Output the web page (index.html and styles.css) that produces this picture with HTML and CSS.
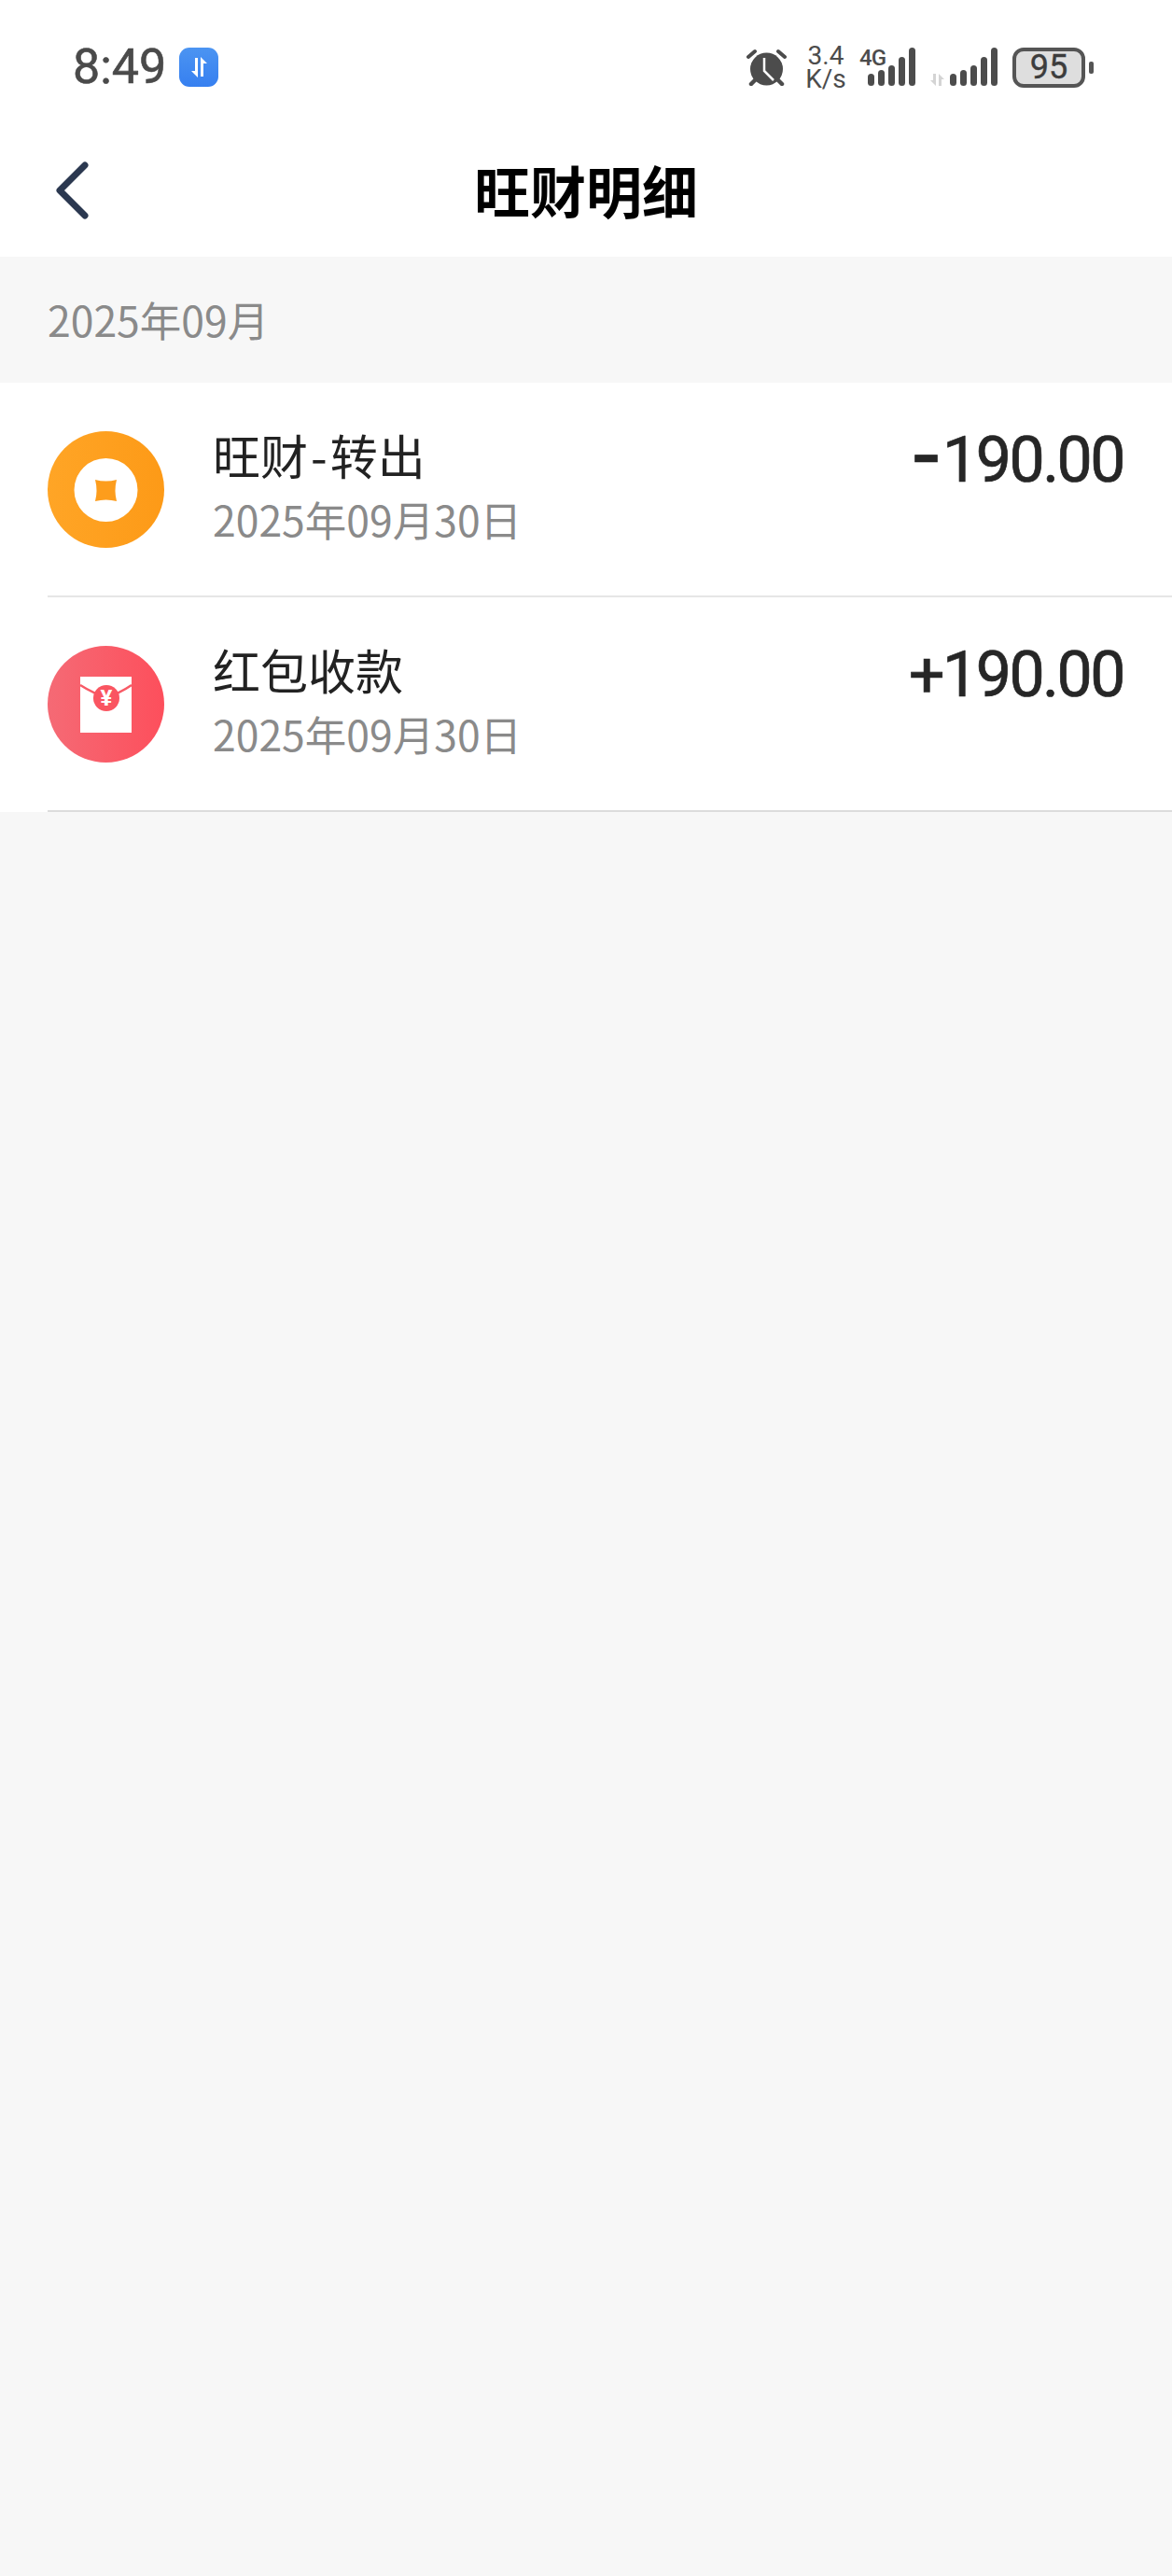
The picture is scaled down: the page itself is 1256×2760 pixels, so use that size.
FILE: index.html
```html
<!DOCTYPE html>
<html lang="zh-CN">
<head>
    <meta charset="UTF-8">
    <meta name="viewport" content="width=device-width, initial-scale=1.0">
    <title>旺财明细</title>
    <link rel="stylesheet" href="styles.css">
</head>
<body>
    <div class="status-bar">
        <div class="status-left">
            <span class="time">8:49</span>
            <svg class="badge" width="42" height="42" viewBox="0 0 42 42">
                <defs>
                    <linearGradient id="badgeFill" x1="0" y1="0" x2="0" y2="1">
                        <stop offset="0" stop-color="#4b94f2"/>
                        <stop offset="1" stop-color="#367ff0"/>
                    </linearGradient>
                </defs>
                <rect width="42" height="42" rx="11" fill="url(#badgeFill)"/>
                <path d="M20 32l-7-7h4V11h3z" fill="#fff"/>
                <path d="M23 10l7 7h-4v14h-3z" fill="#fff"/>
            </svg>
        </div>
        <div class="status-right">
            <svg class="alarm" width="43" height="40" viewBox="0 0 43 40">
                <path d="M2 9 9 3M41 9 34 3" stroke="#4c4c4c" stroke-width="4" stroke-linecap="round" fill="none"/>
                <path d="M9 34 5 38M34 34l4 4" stroke="#4c4c4c" stroke-width="4.500" stroke-linecap="round" fill="none"/>
                <circle cx="21.500" cy="22" r="17.500" fill="#4c4c4c"/>
                <path d="M19 10v14l10 10" stroke="#fff" stroke-width="2.500" fill="none"/>
            </svg>
            <div class="speed"><span>3.4</span><span>K/s</span></div>
            <svg class="signal" width="60" height="42" viewBox="0 0 60 42">
                <text x="0" y="19" class="net-label">4G</text>
                <rect x="9" y="28" width="7" height="13" rx="3.500"/>
                <rect x="20" y="24" width="7" height="17" rx="3.500"/>
                <rect x="31" y="19" width="7" height="22" rx="3.500"/>
                <rect x="42" y="10" width="7" height="31" rx="3.500"/>
                <rect x="53" y="0" width="7" height="41" rx="3.500"/>
            </svg>
            <svg class="signal" width="74" height="42" viewBox="0 0 74 42">
                <path d="M7 41l-6-6h3v-7h3zM10 28l6 6h-3v7h-3z" fill="#d4d4d4"/>
                <rect x="22" y="28" width="7" height="13" rx="3.500"/>
                <rect x="33" y="24" width="7" height="17" rx="3.500"/>
                <rect x="44" y="19" width="7" height="22" rx="3.500"/>
                <rect x="55" y="10" width="7" height="31" rx="3.500"/>
                <rect x="66" y="0" width="7" height="41" rx="3.500"/>
            </svg>
            <div class="battery">
                <div class="battery-body">95</div>
                <div class="battery-nub"></div>
            </div>
        </div>
    </div>

    <div class="nav-bar">
        <svg class="back" width="36" height="62" viewBox="0 0 36 62">
            <path d="M32 4 5 31l27 27" stroke="#2b3850" stroke-width="7" stroke-linecap="round" stroke-linejoin="round" fill="none"/>
        </svg>
        <h1 class="nav-title">旺财明细</h1>
    </div>

    <div class="month">2025年09月</div>

    <div class="list">
        <div class="row">
            <svg class="row-icon" width="125" height="125" viewBox="0 0 125 125">
                <defs>
                    <linearGradient id="coinFill" x1="0" y1="0" x2="1" y2="0">
                        <stop offset="0" stop-color="#ffa526"/>
                        <stop offset="1" stop-color="#fd9a17"/>
                    </linearGradient>
                </defs>
                <circle cx="62.500" cy="62.500" r="62.500" fill="url(#coinFill)"/>
                <circle cx="62.500" cy="63" r="34" fill="#fff"/>
                <path d="M51 52q11.500 3 23 0q-3 11.500 0 23q-11.500-3-23 0q3-11.500 0-23z" fill="#fd9d1c"/>
            </svg>
            <div class="row-text">
                <div class="row-title">旺财<span class="dash">-</span>转出</div>
                <div class="row-date">2025年09月30日</div>
            </div>
            <div class="row-amount"><span class="minus">-</span>190.00</div>
        </div>
        <div class="row">
            <svg class="row-icon" width="125" height="125" viewBox="0 0 125 125">
                <defs>
                    <linearGradient id="packetFill" x1="0" y1="0" x2="1" y2="0">
                        <stop offset="0" stop-color="#f56a75"/>
                        <stop offset="1" stop-color="#fd4f5c"/>
                    </linearGradient>
                </defs>
                <circle cx="62.500" cy="62.500" r="62.500" fill="url(#packetFill)"/>
                <rect x="35" y="33" width="55" height="60" fill="#fff"/>
                <path d="M35 42q14 9 28 13q14-4 27-13" stroke="#f85a66" stroke-width="2.500" fill="none"/>
                <circle cx="63" cy="56" r="14" fill="#fa5561"/>
                <text x="63" y="64" class="yen">¥</text>
            </svg>
            <div class="row-text">
                <div class="row-title">红包收款</div>
                <div class="row-date">2025年09月30日</div>
            </div>
            <div class="row-amount">+190.00</div>
        </div>
    </div>
</body>
</html>
```

FILE: styles.css
```css
body {
    font-family: "Noto Sans CJK SC", "Noto Sans", sans-serif;
    margin: 0;
    height: 100vh;
    background-color: #f7f7f7;
}
.status-bar {
    display: flex;
    justify-content: space-between;
    align-items: center;
    height: 144px;
    padding: 0 84px 0 78px;
    background-color: white;
}
.status-left {
    display: flex;
    align-items: center;
    gap: 14px;
}
.time {
    font-family: Roboto, sans-serif;
    font-size: 52px;
    line-height: 60px;
    -webkit-text-stroke: 0.6px #4a4a4a;
    color: #4a4a4a;
}
.status-right {
    display: flex;
    align-items: center;
}
.alarm {
    margin-right: 23px;
}
.speed {
    display: flex;
    flex-direction: column;
    align-items: center;
    width: 38px;
    margin-right: 17px;
    font-family: Roboto, sans-serif;
    font-size: 28px;
    line-height: 25px;
    color: #4c4c4c;
}
.signal {
    margin-right: 15px;
    overflow: visible;
    fill: #4c4c4c;
}
.net-label {
    font-family: Roboto, sans-serif;
    font-size: 24px;
    font-weight: 500;
    letter-spacing: -1px;
}
.battery {
    display: flex;
    align-items: center;
    gap: 4px;
}
.battery-body {
    box-sizing: border-box;
    width: 78px;
    height: 43px;
    border: 4px solid #555;
    border-radius: 12px;
    background-color: #dedede;
    font-family: Roboto, sans-serif;
    font-size: 36px;
    line-height: 35px;
    text-align: center;
    -webkit-text-stroke: 0.4px #3c3c3c;
    color: #3c3c3c;
}
.battery-nub {
    width: 5px;
    height: 13px;
    border-radius: 2px;
    background-color: #555;
}
.nav-bar {
    display: flex;
    justify-content: center;
    align-items: center;
    position: relative;
    height: 118px;
    padding-bottom: 13px;
    background-color: white;
}
.back {
    position: absolute;
    left: 59px;
    top: 29px;
}
.nav-title {
    margin: 0;
    font-size: 60px;
    line-height: 80px;
    font-weight: 700;
    color: black;
}
.month {
    height: 135px;
    padding-left: 51px;
    font-size: 44.500px;
    line-height: 133px;
    color: #8a8a8a;
}
.list {
    padding-left: 51px;
    background-color: white;
}
.row {
    box-sizing: border-box;
    display: flex;
    align-items: center;
    height: 230px;
    padding-right: 52px;
    border-bottom: 2px solid #e6e6e6;
}
.row:last-child {
    border-bottom-color: #dcdcdc;
}
.row-icon {
    flex-shrink: 0;
}
.yen {
    font-family: Roboto, sans-serif;
    font-size: 24px;
    font-weight: 700;
    text-anchor: middle;
    fill: white;
}
.row-text {
    flex: 1;
    margin-left: 52px;
    margin-bottom: 7px;
}
.row-title {
    font-size: 51px;
    line-height: 70px;
    color: #222;
}
.dash {
    margin: 0 3px;
}
.row-date {
    font-size: 44.500px;
    line-height: 67px;
    color: #8a8a8a;
}
.row-amount {
    align-self: flex-start;
    margin-top: 43px;
    font-family: Roboto, sans-serif;
    font-size: 68px;
    line-height: 80px;
    letter-spacing: -2.500px;
    -webkit-text-stroke: 0.7px #262626;
    color: #262626;
}
.minus {
    margin-right: 6px;
    font-size: 100px;
    line-height: 0;
    vertical-align: -6px;
}
```
